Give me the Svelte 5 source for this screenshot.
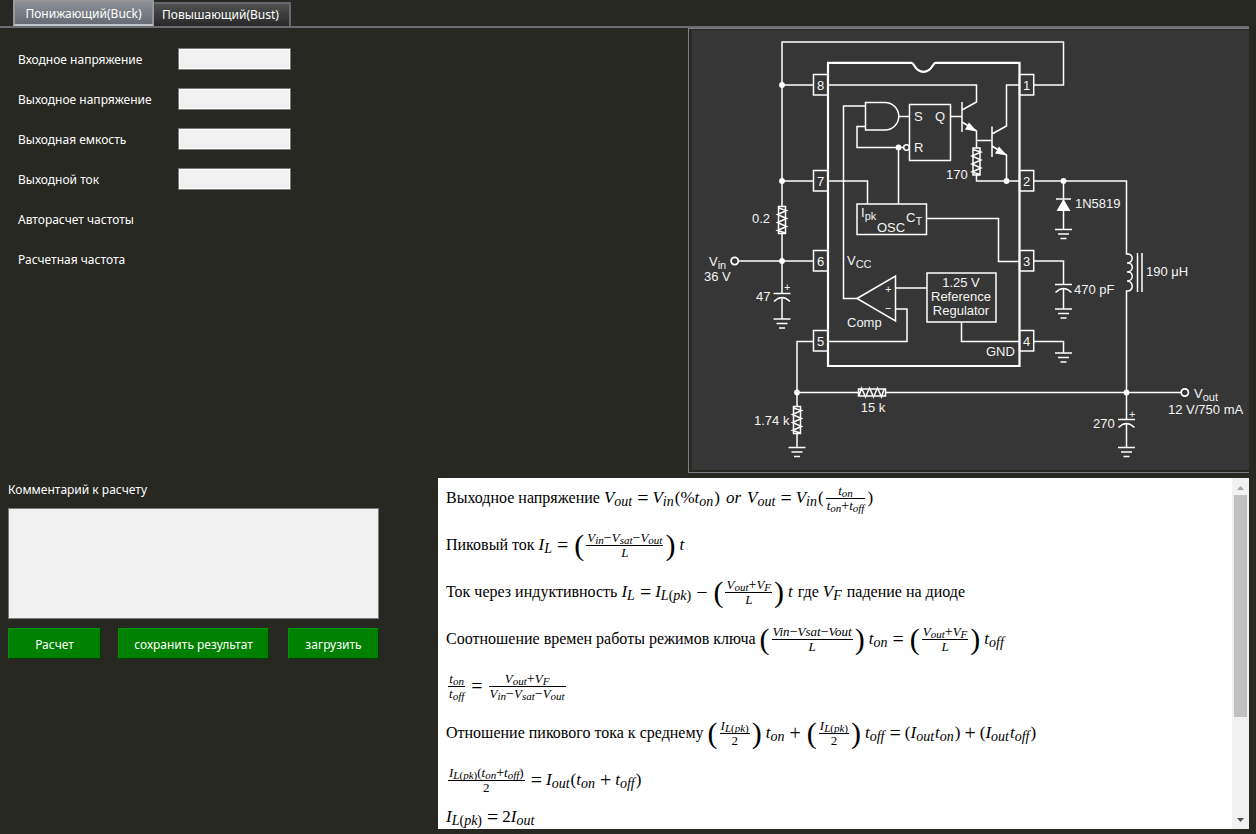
<script>
  const tabs = ['Понижающий(Buck)', 'Повышающий(Bust)'];
  let active = $state(0);

  const fields = [
    { id: 'vin', label: 'Входное напряжение', input: true },
    { id: 'vout', label: 'Выходное напряжение', input: true },
    { id: 'cout', label: 'Выходная емкость', input: true },
    { id: 'iout', label: 'Выходной ток', input: true },
    { id: 'autofreq', label: 'Авторасчет частоты', input: false },
    { id: 'freq', label: 'Расчетная частота', input: false }
  ];

  // Formula nodes: words, variables with a subscript, relations, plain marks, fractions, tall brackets
  const w = (text) => ({ kind: 'word', text });
  const v = (text, sub = '') => ({ kind: 'var', text, sub });
  const r = (text) => ({ kind: 'rel', text });
  const m = (text) => ({ kind: 'mark', text });
  const f = (num, den) => ({ kind: 'frac', num, den });
  const b = (body) => ({ kind: 'tall', body });

  const Vout = v('V', 'out');
  const Vin = v('V', 'in');
  const Vsat = v('V', 'sat');
  const VF = v('V', 'F');
  const L = v('L');
  const ton = v('t', 'on');
  const toff = v('t', 'off');
  const IL = v('I', 'L');
  const Iout = v('I', 'out');
  const Ipk = { kind: 'var', text: 'I', sub: 'L', pk: true };
  const eq = r('=');
  const plus = r('+');
  const minus = r('−');

  const formulas = [
    [w('Выходное напряжение'), Vout, eq, Vin, m('(%'), ton, m(')'), { kind: 'or', text: 'or' }, Vout, eq, Vin, m('('), f([ton], [ton, plus, toff]), m(')')],
    [w('Пиковый ток'), IL, eq, b([f([Vin, minus, Vsat, minus, Vout], [L])]), v('t')],
    [w('Ток через индуктивность'), IL, eq, Ipk, minus, b([f([Vout, plus, VF], [L])]), v('t'), w('где'), VF, w('падение на диоде')],
    [w('Соотношение времен работы режимов ключа'), b([f([v('Vin'), minus, v('Vsat'), minus, v('Vout')], [L])]), ton, eq, b([f([Vout, plus, VF], [L])]), toff],
    [f([ton], [toff]), eq, f([Vout, plus, VF], [Vin, minus, Vsat, minus, Vout])],
    [w('Отношение пикового тока к среднему'), b([f([Ipk], [m('2')])]), ton, plus, b([f([Ipk], [m('2')])]), toff, eq, m('('), Iout, ton, m(')'), plus, m('('), Iout, toff, m(')')],
    [f([Ipk, m('('), ton, plus, toff, m(')')], [m('2')]), eq, Iout, m('('), ton, plus, toff, m(')')],
    [Ipk, eq, m('2'), Iout]
  ];

  const pins = [
    { n: 8, x: 813.5, y: 85 }, { n: 7, x: 813.5, y: 181 }, { n: 6, x: 813.5, y: 261 }, { n: 5, x: 813.5, y: 341 },
    { n: 1, x: 1019.5, y: 85 }, { n: 2, x: 1019.5, y: 181 }, { n: 3, x: 1019.5, y: 261 }, { n: 4, x: 1019.5, y: 341 }
  ];
  const grounds = [[782, 319], [797, 447.5], [1063.5, 229.5], [1063.5, 309], [1063.5, 353], [1126.5, 447.5]];
  const dots = [[782, 85], [782, 181], [782, 261], [797, 392.5], [898.5, 147.5], [1006.5, 181], [1063.5, 181], [1126.5, 392.5]];
  const capacitors = [[782, 293.5], [1063.5, 284.5], [1126.5, 419.5]];
  const resistors = [[782, 220, 0], [976.5, 161.5, 0], [797, 420, 0], [872, 392.5, 90]];
</script>

{#snippet nodes(list)}
  {#each list as n}
    {#if n.kind === 'frac'}
      <span class="frac"><span class="num">{@render nodes(n.num)}</span><span class="den">{@render nodes(n.den)}</span></span>
    {:else if n.kind === 'tall'}
      <span class="tall"><span class="big">(</span>{@render nodes(n.body)}<span class="big">)</span></span>
    {:else if n.kind === 'var'}
      <span class="var"><i>{n.text}</i>{#if n.sub}<sub><i>{n.sub}</i>{#if n.pk}(<i>pk</i>){/if}</sub>{/if}</span>
    {:else}
      <span class={n.kind}>{n.text}</span>
    {/if}
  {/each}
{/snippet}

<div class="app">
  <div class="tabs" role="tablist">
    {#each tabs as tab, i}
      <button role="tab" class:active={active === i} aria-selected={active === i} onclick={() => (active = i)}>{tab}</button>
    {/each}
  </div>

  <div class="top">
    <form class="fields">
      {#each fields as field}
        <div class="row">
          {#if field.input}
            <label for={field.id}>{field.label}</label>
            <input id={field.id} type="text" />
          {:else}
            <span>{field.label}</span>
          {/if}
        </div>
      {/each}
    </form>

    <div class="diagram">
      <svg viewBox="692 30 557 440" role="img" aria-label="Buck">
        <rect x="692" y="30" width="557" height="440" fill="#363636" />
        <g fill="none" stroke="#fff" stroke-width="1.5">
          <path d="M782 207V42H1063.5V85H1033.5M782 85H813.5M782 181H813.5M782 233V293M738.5 261H813.5M782 297.5V319" />
          <path d="M828 85H976.5V102L962 110M962 102V132M962 122L976.5 131V148M976.5 140.5H992M992 126.5V157M992 134L1006.5 126V85H1019.5M992 146L1006.5 155V181M976.5 175V181H1019.5" />
          <path d="M865.5 106H843.5V298.5H857M865.5 102.5H885A13.7 13.7 0 0 1 885 130H865.5ZM898.5 116.5H909.5M865.5 126.5H857V147.5H903.5M898.5 147.5V204M950.5 116.5H962" />
          <circle cx="906.5" cy="147.5" r="2.8" />
          <path d="M909.5 104.5H950.5V160.5H909.5ZM857 204H926.5V234.5H857ZM828 181H867.5V204M926.5 218.5H998.5V261.5H1019.5" />
          <path d="M857 298.5L895.5 276V321ZM895.5 288H927M895.5 309H907V341.5H828M927 273H996V322H927ZM961.5 322V341.5H1019.5" />
          <path d="M813.5 341.5H797V407M797 433V447.5M797 392.5H858.5M885.5 392.5H1181" />
          <path d="M1033.5 181H1126.5V254C1134 253 1134 263 1127 263C1134 262 1134 272 1127 272C1134 271 1134 281 1127 281C1134 281 1134 292 1126.5 291V419M1126.5 423V447.5M1137.5 253V292M1142 253V292" />
          <path d="M1063.5 181V229.5M1056 199H1071M1033.5 261H1063.5V284M1063.5 288V309M1033.5 341.5H1063.5V353" />
          {#each grounds as [x, y]}
            <path d="M{x - 8.5} {y}h17M{x - 5.5} {y + 4.5}h11M{x - 3} {y + 9}h6" />
          {/each}
          {#each capacitors as [x, y]}
            <path d="M{x - 8.5} {y}h17M{x - 8} {y + 8}Q{x} {y} {x + 8} {y + 8}" />
          {/each}
          {#each resistors as [x, y, a]}
            <g transform="translate({x} {y}) rotate({a})">
              <path d="M-3.5 -13.5h7v27h-7ZM-3.5 -12L4.5 -9.5L-4.5 -5.5L4.5 -1.5L-4.5 2.5L4.5 6.5L-4.5 10.5L3.5 13" />
            </g>
          {/each}
          <circle cx="734.7" cy="261" r="3.6" stroke-width="1.8" />
          <circle cx="1184.8" cy="392.5" r="3.6" stroke-width="1.8" />
          {#each pins as p}
            <rect x={p.x} y={p.y - 10.5} width="14.2" height="20.5" />
          {/each}
          <path stroke-width="2.2" d="M828 62.8H911.5C914.5 62.8 914.5 71.8 923.5 71.8S932.5 62.8 935.5 62.8H1019.5V366H828Z" />
        </g>
        <g fill="#fff">
          {#each dots as [x, y]}<circle cx={x} cy={y} r="2.9" />{/each}
          <path d="M1063.5 199L1070.5 211H1056.5ZM977 131.500L969 122.500L965 129.500ZM1007 155.500L999 146.500L995 153.500Z" />
        </g>
        <g class="txt">
          {#each pins as p}<text class="mid" x={p.x + 7} y={p.y + 5}>{p.n}</text>{/each}
          <text x="752" y="223">0.2</text>
          <text x="709" y="266">V<tspan class="s" dy="3">in</tspan></text>
          <text x="704" y="281">36 V</text>
          <text x="756" y="301">47</text>
          <text class="s" x="784" y="291">+</text>
          <text x="754" y="425">1.74 k</text>
          <text class="mid" x="873" y="412">15 k</text>
          <text x="914" y="121">S</text>
          <text x="935" y="121">Q</text>
          <text x="914" y="152">R</text>
          <text x="946" y="179">170</text>
          <text x="861" y="217">I<tspan class="s" dy="3">pk</tspan></text>
          <text x="877" y="232">OSC</text>
          <text x="906" y="222">C<tspan class="s" dy="3">T</tspan></text>
          <text x="847" y="265">V<tspan class="s" dy="3">CC</tspan></text>
          <text x="847" y="327">Comp</text>
          <text class="s" x="885" y="293">+</text>
          <text class="s" x="885" y="312">−</text>
          <text class="mid" x="961" y="287">1.25 V</text>
          <text class="mid" x="961" y="301">Reference</text>
          <text class="mid" x="961" y="315">Regulator</text>
          <text x="986" y="356">GND</text>
          <text x="1075" y="208">1N5819</text>
          <text x="1074" y="294">470 pF</text>
          <text x="1146" y="276">190 μH</text>
          <text x="1093" y="428">270</text>
          <text class="s" x="1129" y="418">+</text>
          <text x="1194" y="398">V<tspan class="s" dy="3">out</tspan></text>
          <text x="1168" y="414">12 V/750 mA</text>
        </g>
      </svg>
    </div>
  </div>

  <div class="bottom">
    <section class="comment">
      <label for="comment">Комментарий к расчету</label>
      <textarea id="comment"></textarea>
      <div class="actions">
        <button class="calc">Расчет</button>
        <button class="save">сохранить результат</button>
        <button class="load">загрузить</button>
      </div>
    </section>

    <section class="panel">
      <div class="formulas">
        {#each formulas as line}
          <p>{@render nodes(line)}</p>
        {/each}
      </div>
      <div class="scroll" aria-hidden="true">
        <svg viewBox="0 0 17 17"><path d="M5 12L8.500 8L12 12Z" fill="#a3a3a3" /></svg>
        <div class="track"><div class="thumb"></div></div>
        <svg viewBox="0 0 17 17"><path d="M5 6L8.500 10L12 6Z" fill="#505050" /></svg>
      </div>
    </section>
  </div>
</div>

<style>
  :global(body) { margin: 0; background: #272822; }
  .app {
    box-sizing: border-box;
    min-height: 100vh;
    padding-right: 7px;
    color: #fff;
    font: 12px/16px "Noto Sans", Tahoma, sans-serif;
  }
  button, input, textarea { font: inherit; box-sizing: border-box; margin: 0; }
  .tabs {
    display: flex;
    align-items: flex-end;
    height: 26px;
    padding-left: 13px;
    border-bottom: 2px solid #696c72;
  }
  .tabs button {
    width: 137px;
    height: 24px;
    padding: 0 2px 0 0;
    color: #fff;
    border: 2px solid #65686d;
    border-width: 2px 2px 0 0;
    background: linear-gradient(#505050, #282828);
    white-space: nowrap;
  }
  .tabs button.active {
    width: 141px;
    height: 26px;
    padding: 2px 0 0;
    border: 2px solid #989898;
    border-bottom-color: #c0c4ca;
    background: linear-gradient(#8b9097, #666b74);
  }
  .top {
    display: grid;
    grid-template-columns: 1fr minmax(0, 561px);
  }
  .fields {
    display: flex;
    flex-direction: column;
    gap: 18px;
    padding: 20px 0 0 18px;
  }
  .row {
    display: grid;
    grid-template-columns: 160px 113px;
    align-items: center;
    height: 22px;
  }
  .row label, .row span { padding-top: 2px; }
  .row input {
    width: 100%;
    height: 22px;
    padding: 0 4px;
    border: 1px solid #7a7a7a;
    box-shadow: inset 0 0 0 1px #fff;
    background: #f1f1f1;
  }
  .diagram {
    padding: 1px 0 2px 3px;
    border: 1px solid #7c7f8a;
    border-right: 0;
  }
  .diagram svg { display: block; width: 100%; }
  .txt { fill: #f4f4f4; font: 13px "Liberation Sans", Arial, sans-serif; }
  .txt .s { font-size: 11px; }
  .txt .mid { text-anchor: middle; }
  .bottom {
    display: grid;
    grid-template-columns: 371px 1fr;
    gap: 59px;
    padding: 5px 0 5px 8px;
  }
  .comment { display: flex; flex-direction: column; padding-top: 4px; }
  .comment textarea {
    height: 111px;
    margin: 10px 0 9px;
    padding: 4px;
    border: 1px solid #7a7a7a;
    background: #f1f1f1;
    resize: none;
  }
  .actions { display: flex; }
  .actions button {
    height: 31px;
    padding: 2px 0 0;
    color: #fff;
    background: #008000;
    border: 1px solid;
    border-color: #009600 #003c00 #003c00 #009600;
    white-space: nowrap;
  }
  .calc { width: 93px; }
  .actions .save { width: 151px; margin: 0 19px 0 17px; }
  .load { width: 91px; }
  .panel {
    display: flex;
    height: 351px;
    background: #fff;
    color: #000;
  }
  .formulas {
    flex: 1;
    overflow: hidden;
    padding-left: 8px;
    font: 16px/20px "Liberation Serif", "Times New Roman", serif;
    font-variant-ligatures: none;
  }
  .formulas p {
    display: flex;
    align-items: center;
    height: 40px;
    margin: 0 0 7px;
    white-space: nowrap;
  }
  .formulas p:last-child { height: 20px; margin: 0; }
  .word { margin-right: 4px; }
  .var, .mark, .or { font-size: 17px; }
  .var { padding-right: 1px; }
  .var + .word { margin-left: 4px; }
  .rel { margin: 0 4px; font-size: 20px; }
  .rel + .tall { margin-left: 2px; }
  .or { margin: 0 6px; font-style: italic; }
  sub { font-size: 14px; line-height: 0; vertical-align: -3px; }
  .frac {
    display: inline-flex;
    flex-direction: column;
    align-items: center;
    margin: 0 2px;
  }
  .num, .den {
    display: flex;
    justify-content: center;
    align-self: stretch;
    line-height: 14px;
    padding: 0 1px;
  }
  .num { border-bottom: 1px solid #000; }
  .frac .var, .frac .mark { font-size: 13px; }
  .frac .rel { font-size: 14px; }
  .frac .var { padding: 0; }
  .frac .rel { margin: 0; }
  .frac sub { font-size: 11px; vertical-align: -2px; }
  .tall { display: inline-flex; align-items: center; margin-right: 4px; }
  .big { font-size: 30px; line-height: 30px; }
  .scroll { display: flex; flex-direction: column; width: 17px; background: #f1f1f1; }
  .scroll svg { display: block; width: 17px; height: 17px; }
  .track { flex: 1; padding: 0 2px; }
  .thumb { height: 70%; background: #c1c1c1; }
</style>
